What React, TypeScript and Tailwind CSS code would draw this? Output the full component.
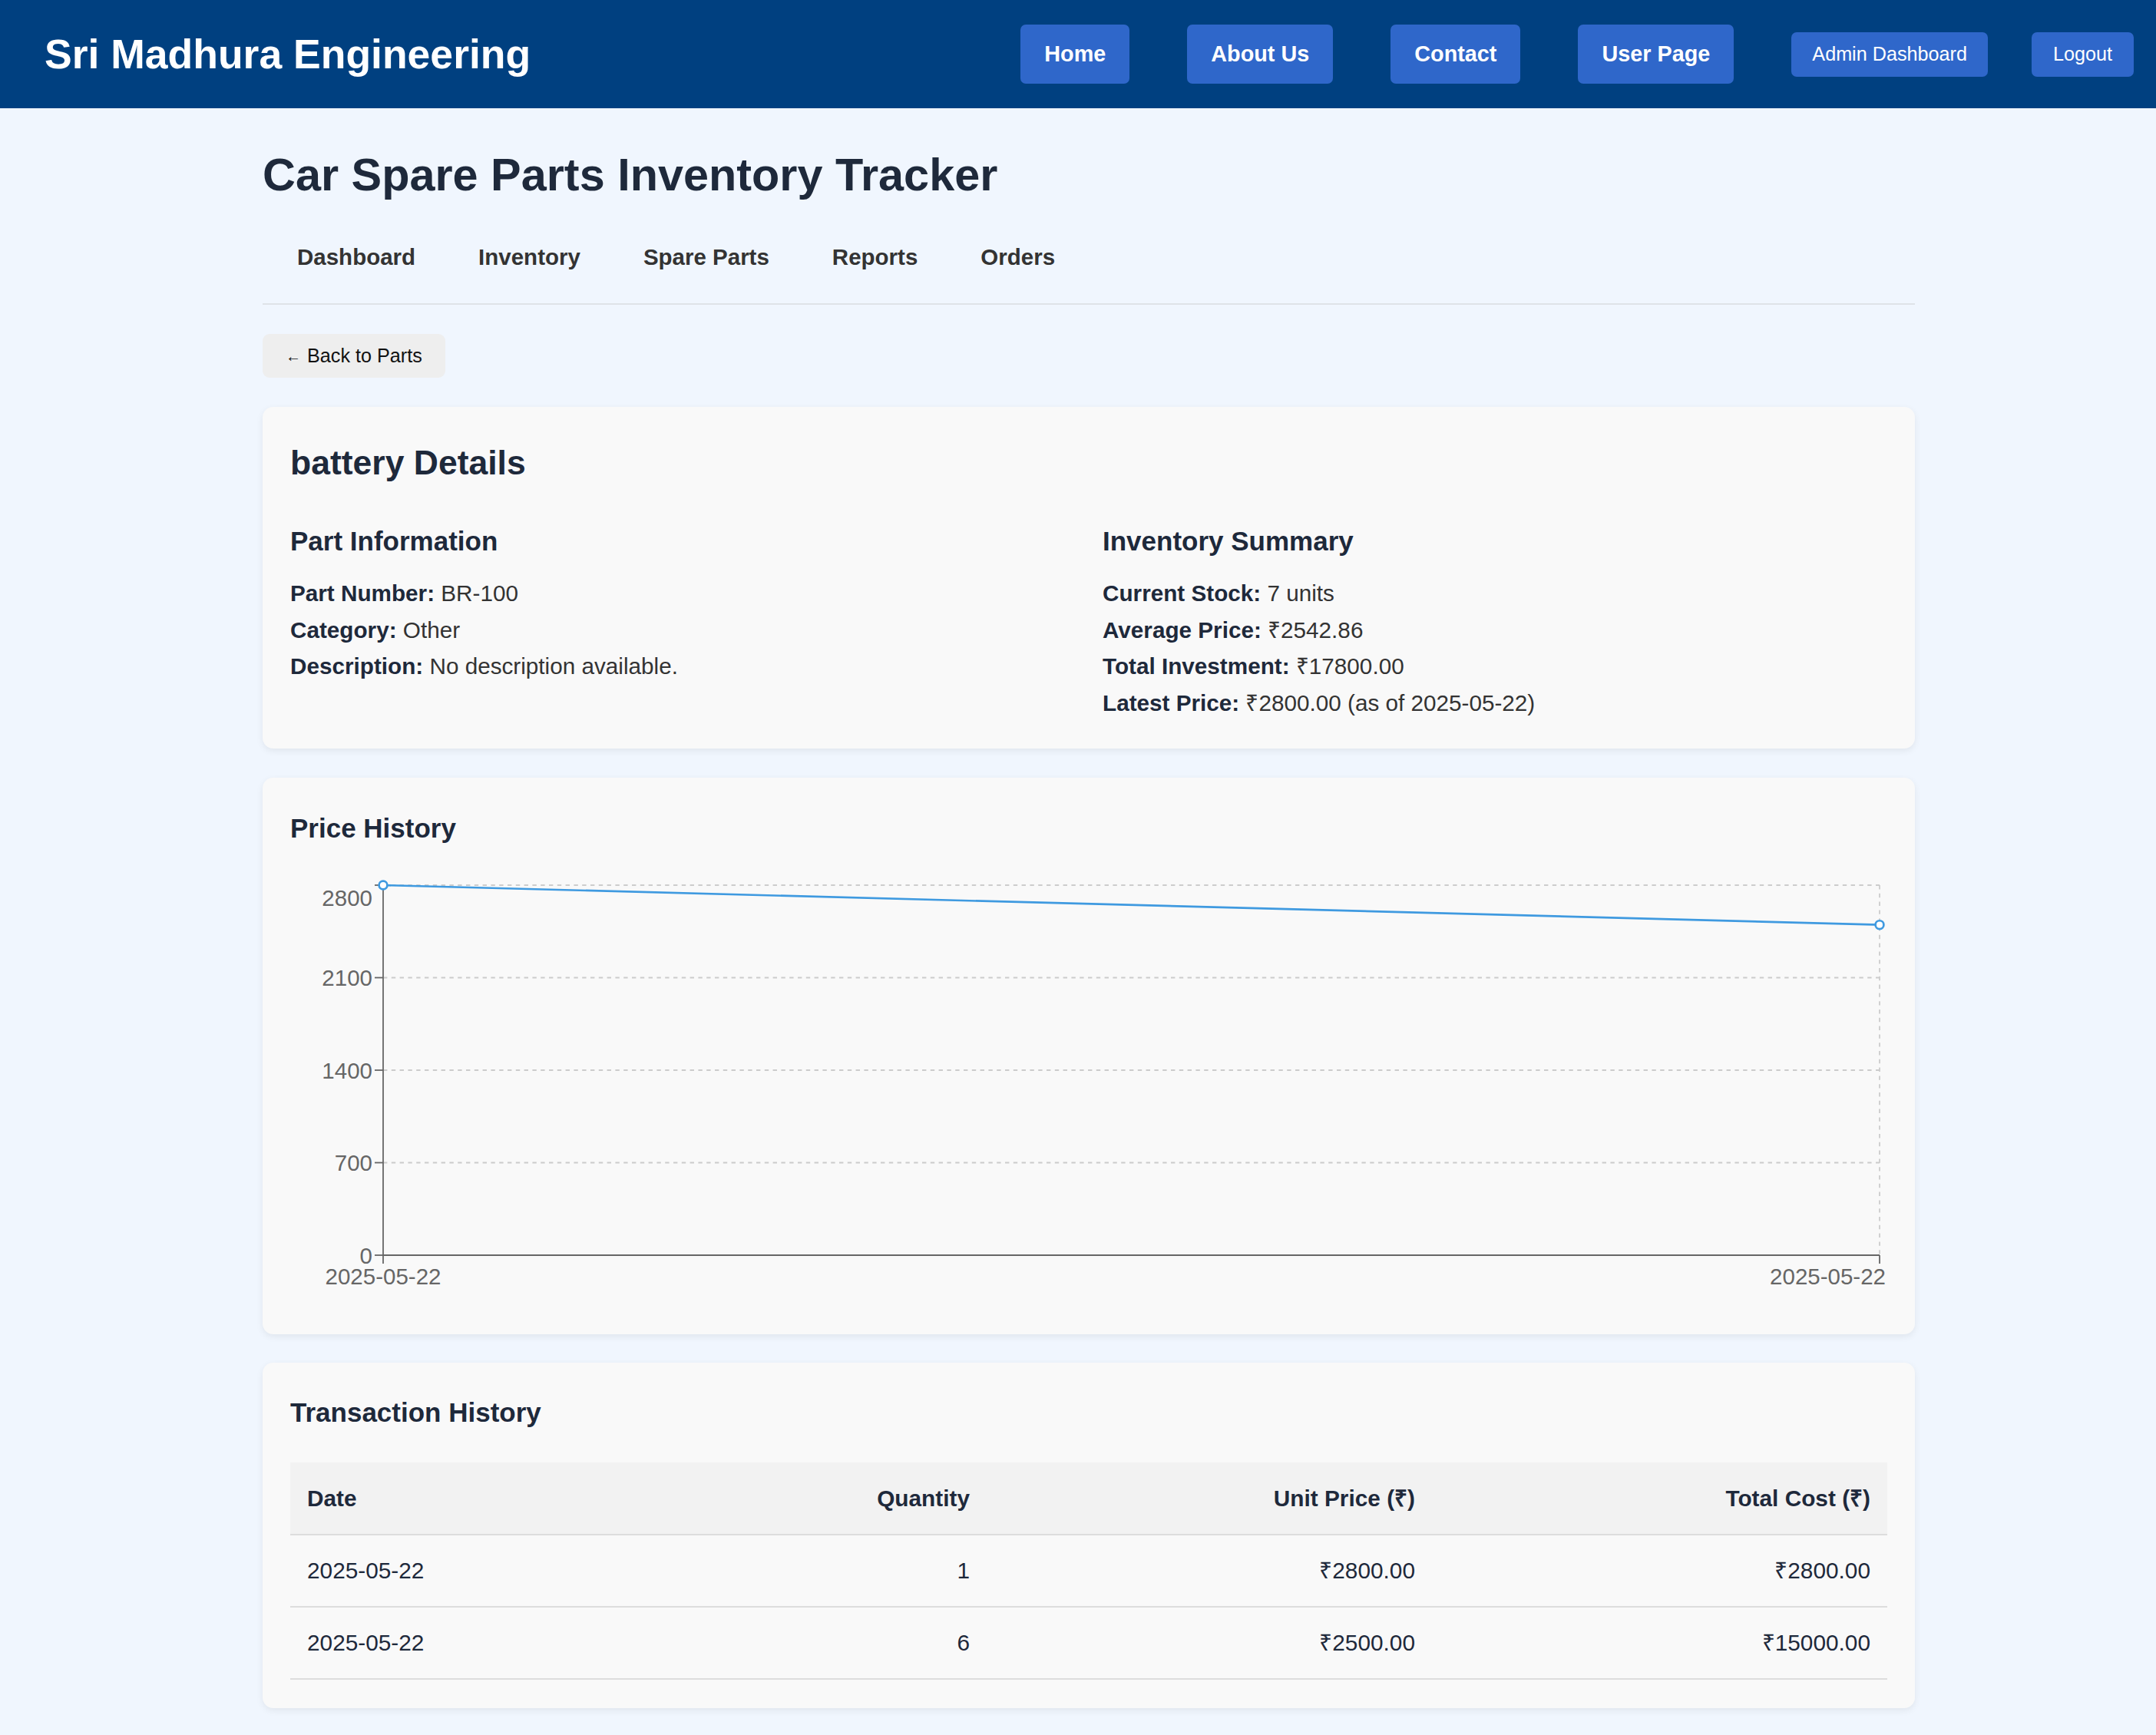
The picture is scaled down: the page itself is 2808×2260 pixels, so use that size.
import React from "react";

const navLinks = ["Home", "About Us", "Contact", "User Page"];
const tabs = ["Dashboard", "Inventory", "Spare Parts", "Reports", "Orders"];

const transactions = [
  { date: "2025-05-22", qty: 1, unit: "₹2800.00", total: "₹2800.00" },
  { date: "2025-05-22", qty: 6, unit: "₹2500.00", total: "₹15000.00" },
];

/**
 * 価格推移チャート
 */
function PriceChart() {
  const x0 = 121;
  const x1 = 2070;
  const yTop = 43;
  const yBase = 525;
  const y = (v: number) => yBase - (v / 2800) * (yBase - yTop);
  const ticks = [0, 700, 1400, 2100, 2800];
  const pts = [
    { x: x0, y: y(2800) },
    { x: x1, y: y(2500) },
  ];
  const fs = 29.5;

  return (
    <svg width={2080} height={590} className="mt-[13px] block">
      {ticks.slice(1).map((t) => (
        <line key={t} x1={x0} x2={x1} y1={y(t)} y2={y(t)} stroke="#cccccc" strokeWidth={1.8} strokeDasharray="5.4 5.4" />
      ))}
      <line x1={x1} x2={x1} y1={yTop} y2={yBase} stroke="#cccccc" strokeWidth={1.8} strokeDasharray="5.4 5.4" />

      {/* y axis */}
      <line x1={x0} x2={x0} y1={yTop} y2={yBase} stroke="#666" strokeWidth={1.8} />
      {ticks.map((t) => (
        <g key={t}>
          <line x1={x0 - 11} x2={x0} y1={y(t)} y2={y(t)} stroke="#666" strokeWidth={1.8} />
          <text
            x={x0 - 14}
            y={t === 2800 ? 70 : y(t) + 10.5}
            textAnchor="end"
            fontSize={fs}
            fill="#666"
            fontFamily="Liberation Sans, Arial, sans-serif"
          >
            {t}
          </text>
        </g>
      ))}

      {/* x axis */}
      <line x1={x0} x2={x1} y1={yBase} y2={yBase} stroke="#666" strokeWidth={1.8} />
      <line x1={x0} x2={x0} y1={yBase} y2={yBase + 11} stroke="#666" strokeWidth={1.8} />
      <line x1={x1} x2={x1} y1={yBase} y2={yBase + 11} stroke="#666" strokeWidth={1.8} />
      <text x={x0} y={563} textAnchor="middle" fontSize={fs} fill="#666" fontFamily="Liberation Sans, Arial, sans-serif">
        2025-05-22
      </text>
      <text x={2078} y={563} textAnchor="end" fontSize={fs} fill="#666" fontFamily="Liberation Sans, Arial, sans-serif">
        2025-05-22
      </text>

      {/* line */}
      <line x1={pts[0].x} y1={pts[0].y} x2={pts[1].x} y2={pts[1].y} stroke="#3f9ae0" strokeWidth={2.7} />
      {pts.map((p, i) => (
        <circle key={i} cx={p.x} cy={p.y} r={5.4} fill="#fff" stroke="#3f9ae0" strokeWidth={2.7} />
      ))}
    </svg>
  );
}

function Row({ label, value }: { label: string; value: string }) {
  return (
    <p className="leading-[33px] text-[#333]">
      <strong className="font-bold text-[#1e293b]">{label}</strong> {value}
    </p>
  );
}

export default function App() {
  return (
    <div className="min-h-screen bg-[#f0f6fe] pb-[36px] font-['Liberation_Sans',Arial,sans-serif] text-[29.7px]">
      <header className="flex h-[141px] items-center justify-between bg-[#004080] pl-[58px] pr-[29px]">
        <h1 className="text-[53.5px] font-bold leading-none text-white">Sri Madhura Engineering</h1>
        <nav className="flex items-center">
          <div className="flex items-center gap-[75px]">
            {navLinks.map((l) => (
              <a
                key={l}
                href="#"
                className="rounded-[7px] bg-[#2f67ca] px-[31px] py-[22px] text-[28.8px] font-bold leading-[33px] text-white"
              >
                {l}
              </a>
            ))}
          </div>
          <button className="ml-[75px] rounded-[7px] bg-[#2f67ca] px-[27px] py-[14.5px] text-[25.2px] leading-[29px] text-white">
            Admin Dashboard
          </button>
          <button className="ml-[57px] rounded-[7px] bg-[#2f67ca] px-[28px] py-[14.5px] text-[25.2px] leading-[29px] text-white">
            Logout
          </button>
        </nav>
      </header>

      <main className="ml-[342px] w-[2152px] pt-[54px]">
        <h1 className="text-[59.4px] font-bold leading-[66px] text-[#1e293b]">Car Spare Parts Inventory Tracker</h1>

        <div className="mt-[57px] flex gap-[82px] border-b-2 border-[#dfe3e8] pb-[44px] pl-[45px]">
          {tabs.map((t) => (
            <span key={t} className="text-[29.5px] font-bold leading-[33px] text-[#333]">
              {t}
            </span>
          ))}
        </div>

        <button className="mt-[38px] flex h-[57px] items-center gap-[8px] rounded-[9px] bg-[#eeeeee] px-[30px] text-[25.2px] text-[#111]">
          <span className="text-[20px]">←</span>
          <span>Back to Parts</span>
        </button>

        <section className="mt-[38px] rounded-[14px] bg-[#f9f9f9] px-[36px] pb-[43px] pt-[48px] shadow-[0_3px_10px_rgba(0,0,0,0.07)]">
          <h2 className="text-[44.5px] font-bold leading-[50px] text-[#1e293b]">battery Details</h2>
          <div className="mt-[58px] grid grid-cols-2 gap-[36px]">
            <div>
              <h3 className="text-[35px] font-bold leading-[37px] text-[#1e293b]">Part Information</h3>
              <div className="mt-[33px] flex flex-col gap-[14.5px]">
                <Row label="Part Number:" value="BR-100" />
                <Row label="Category:" value="Other" />
                <Row label="Description:" value="No description available." />
              </div>
            </div>
            <div>
              <h3 className="text-[35px] font-bold leading-[37px] text-[#1e293b]">Inventory Summary</h3>
              <div className="mt-[33px] flex flex-col gap-[14.5px]">
                <Row label="Current Stock:" value="7 units" />
                <Row label="Average Price:" value="₹2542.86" />
                <Row label="Total Investment:" value="₹17800.00" />
                <Row label="Latest Price:" value="₹2800.00 (as of 2025-05-22)" />
              </div>
            </div>
          </div>
        </section>

        <section className="mt-[38px] rounded-[14px] bg-[#f9f9f9] px-[36px] pb-[38px] pt-[47px] shadow-[0_3px_10px_rgba(0,0,0,0.07)]">
          <h3 className="text-[35px] font-bold leading-[37px] text-[#1e293b]">Price History</h3>
          <PriceChart />
        </section>

        <section className="mt-[37px] rounded-[14px] bg-[#f9f9f9] px-[36px] pb-[37px] pt-[46px] shadow-[0_3px_10px_rgba(0,0,0,0.07)]">
          <h3 className="text-[35px] font-bold leading-[37px] text-[#1e293b]">Transaction History</h3>
          <table className="mt-[47px] w-full table-fixed border-collapse text-[29.8px] leading-[33px] text-[#1e293b]">
            <colgroup>
              <col className="w-[507px]" />
              <col className="w-[400px]" />
              <col className="w-[580px]" />
              <col className="w-[593px]" />
            </colgroup>
            <thead>
              <tr className="h-[94px] border-b-2 border-[#dddddd] bg-[#f2f2f2]">
                <th className="px-[22px] text-left font-bold">Date</th>
                <th className="px-[22px] text-right font-bold">Quantity</th>
                <th className="px-[22px] text-right font-bold">Unit Price (₹)</th>
                <th className="px-[22px] text-right font-bold">Total Cost (₹)</th>
              </tr>
            </thead>
            <tbody>
              {transactions.map((t, i) => (
                <tr key={i} className="h-[94px] border-b-2 border-[#dddddd]">
                  <td className="px-[22px] text-left">{t.date}</td>
                  <td className="px-[22px] text-right">{t.qty}</td>
                  <td className="px-[22px] text-right">{t.unit}</td>
                  <td className="px-[22px] text-right">{t.total}</td>
                </tr>
              ))}
            </tbody>
          </table>
        </section>
      </main>
    </div>
  );
}
